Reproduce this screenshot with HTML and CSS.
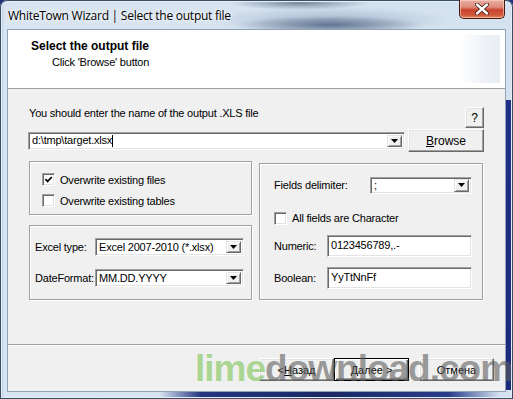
FILE: index.html
```html
<!DOCTYPE html>
<html>
<head>
<meta charset="utf-8">
<link rel="stylesheet" href="styles.css">
</head>
<body>
<div class="window">
  <div class="titlebar">
    <span class="title">WhiteTown Wizard | Select the output file</span>
    <div class="close">
      <svg width="16" height="12" viewBox="0 0 16 12"><path d="M3 1.5 L13 10.5 M13 1.5 L3 10.5" stroke="#3a1a14" stroke-width="4" stroke-linecap="round"/><path d="M3 1.5 L13 10.5 M13 1.5 L3 10.5" stroke="#ffffff" stroke-width="2.4" stroke-linecap="round"/></svg>
    </div>
  </div>
  <div class="client">
    <div class="header">
      <div class="htext">
        <div class="htitle">Select the output file</div>
        <div class="hsub">Click 'Browse' button</div>
      </div>
      <div class="hlogo"></div>
    </div>
    <div class="content">
      <div class="row-label">
        <span class="lbl">You should enter the name of the output .XLS file</span>
        <button class="btn help">?</button>
      </div>
      <div class="row-file">
        <div class="combo cfile"><span class="val">d:\tmp\target.xlsx</span><span class="caret"></span><span class="dd"><svg width="7" height="4" viewBox="0 0 7 4"><polygon points="0,0 7,0 3.5,4" fill="#000"/></svg></span></div>
        <button class="btn browse"><u>B</u>rowse</button>
      </div>
      <div class="groups">
        <div class="col">
          <div class="group g-over">
            <div class="check"><span class="cb"><svg width="9" height="9" viewBox="0 0 9 9"><polyline points="1.5,4.2 3.6,6.4 7.8,2" fill="none" stroke="#000" stroke-width="1.8"/></svg></span><span>Overwrite existing files</span></div>
            <div class="check"><span class="cb"></span><span>Overwrite existing tables</span></div>
          </div>
          <div class="group g-type">
            <div class="frow"><span class="flabel">Excel type:</span><div class="combo ctype"><span class="val">Excel 2007-2010 (*.xlsx)</span><span class="dd"><svg width="7" height="4" viewBox="0 0 7 4"><polygon points="0,0 7,0 3.5,4" fill="#000"/></svg></span></div></div>
            <div class="frow"><span class="flabel">DateFormat:</span><div class="combo ctype"><span class="val">MM.DD.YYYY</span><span class="dd"><svg width="7" height="4" viewBox="0 0 7 4"><polygon points="0,0 7,0 3.5,4" fill="#000"/></svg></span></div></div>
          </div>
        </div>
        <div class="group g-fields">
          <div class="frow r-delim"><span class="flabel2">Fields delimiter:</span><div class="combo cdelim"><span class="val">;</span><span class="dd"><svg width="7" height="4" viewBox="0 0 7 4"><polygon points="0,0 7,0 3.5,4" fill="#000"/></svg></span></div></div>
          <div class="check r-char"><span class="cb"></span><span>All fields are Character</span></div>
          <div class="frow r-num"><span class="flabel3">Numeric:</span><div class="edit">0123456789,.-</div></div>
          <div class="frow r-bool"><span class="flabel3">Boolean:</span><div class="edit">YyTtNnFf</div></div>
        </div>
      </div>
    </div>
    <div class="footer">
      <button class="btn fbtn">&lt; <u>Н</u>азад</button>
      <button class="btn fbtn default"><u>Д</u>алее &gt;</button>
      <button class="btn fbtn cancel">Отмена</button>
    </div>
  </div>
  <div class="watermark"><span class="lime">lime</span><span class="dl">download.com</span></div>
</div>
</body>
</html>
```

FILE: styles.css
```css
* { box-sizing: border-box; }
html, body { margin: 0; padding: 0; }
body {
  width: 513px;
  height: 399px;
  overflow: hidden;
  background: #1d2f7a;
  font-family: "Liberation Sans", Arial, sans-serif;
}
.window {
  position: relative;
  width: 513px;
  height: 399px;
  display: flex;
  flex-direction: column;
  border-radius: 7px 7px 0 0;
  box-shadow: inset 0 0 0 1px #3b4d63, inset 0 0 0 2px #e4eef8;
  background:
    radial-gradient(ellipse 95px 9px at 330px 25px, rgba(70,90,120,0.75), rgba(70,90,120,0) 100%),
    radial-gradient(ellipse 70px 7px at 300px 3px, rgba(60,75,100,0.6), rgba(60,75,100,0) 100%),
    radial-gradient(ellipse 120px 14px at 330px 20px, rgba(130,150,180,0.55), rgba(130,150,180,0) 100%),
    linear-gradient(#1f2f86, #1b2a78) right 1px top 100px / 6px 290px no-repeat,
    linear-gradient(90deg, rgba(30,45,120,0), #24357f 12%, #1a2864 50%, #2a3d8a 85%, rgba(30,45,120,0)) left 160px bottom 1px / 340px 6px no-repeat,
    linear-gradient(90deg, #cfdced 0, #c0d2e6 2px, #d8e4f1 4px, #d4e1ee 100%);
}
.titlebar {
  height: 30px;
  flex: none;
  display: flex;
  align-items: flex-start;
  padding-left: 8px;
}
.title {
  margin-top: 7px;
  font-family: "Open Sans", "Noto Sans", sans-serif;
  font-size: 12px;
  letter-spacing: -0.25px;
  color: #000;
  text-shadow: 0 0 6px rgba(255,255,255,0.95), 0 0 3px rgba(255,255,255,0.9);
}
.close {
  margin-left: auto;
  margin-right: 8px;
  width: 46px;
  height: 19px;
  border: 1px solid #4a1810;
  border-top: none;
  border-radius: 0 0 5px 5px;
  background: linear-gradient(#eab0a4 0, #de8a78 40%, #c9432e 55%, #d25a3c 85%, #e48a60 100%);
  box-shadow: inset 0 0 0 1px rgba(255,220,210,0.55);
  display: flex;
  align-items: center;
  justify-content: center;
}
.client {
  flex: none;
  margin: 0 8px;
  width: 497px;
  height: 361px;
  background: #f0f0f0;
  display: flex;
  flex-direction: column;
  box-shadow: 0 0 0 1px #8fa2b8;
}
.header {
  flex: none;
  height: 59px;
  background: #fff;
  border-bottom: 1px solid #a0a0a0;
  display: flex;
  align-items: flex-start;
  padding: 9px 5px 0 23px;
}
.htitle {
  font-weight: bold;
  font-size: 12px;
  line-height: 14px;
  color: #000;
}
.hsub {
  margin-top: 2px;
  padding-left: 21px;
  font-size: 11px;
  line-height: 14px;
  letter-spacing: -0.2px;
  color: #000;
}
.hlogo {
  margin-left: auto;
  margin-top: -4px;
  width: 40px;
  height: 48px;
  background: linear-gradient(90deg, #ffffff, #eef2f7 60%, #e9eef4);
}
.content {
  flex: none;
  height: 255px;
  padding: 18px 21px 0 21px;
  display: flex;
  flex-direction: column;
  font-size: 11px;
  letter-spacing: -0.2px;
  color: #000;
}
.row-label {
  display: flex;
  justify-content: space-between;
  align-items: flex-start;
  height: 22px;
}
.lbl { line-height: 13px; }
.btn {
  font-family: "Liberation Sans", Arial, sans-serif;
  font-size: 11px;
  color: #000;
  background: #f0f0f0;
  border: 1px solid;
  border-color: #ffffff #696969 #696969 #ffffff;
  box-shadow: inset -1px -1px 0 #a0a0a0, inset 1px 1px 0 #e3e3e3;
  padding: 0;
  margin: 0;
  display: flex;
  align-items: center;
  justify-content: center;
}
.help { width: 19px; height: 21px; font-size: 12px; }
.row-file {
  display: flex;
  align-items: center;
  gap: 3px;
  height: 23px;
}
.browse { width: 76px; height: 23px; font-size: 12px; }
.combo, .edit {
  background: #fff;
  border: 1px solid;
  border-color: #a0a0a0 #ffffff #ffffff #a0a0a0;
  box-shadow: inset 1px 1px 0 #696969, inset -1px -1px 0 #e3e3e3;
  display: flex;
  align-items: center;
  padding: 2px 2px 2px 3px;
  font-size: 11px;
  line-height: 13px;
}
.combo .val { flex: 1; white-space: nowrap; overflow: hidden; }
.combo .dd {
  flex: none;
  width: 15px;
  align-self: stretch;
  background: #f0f0f0;
  border: 1px solid;
  border-color: #e3e3e3 #696969 #696969 #e3e3e3;
  box-shadow: inset 1px 1px 0 #fff, inset -1px -1px 0 #a0a0a0;
  display: flex;
  align-items: center;
  justify-content: center;
}
.cfile {
  margin-left: -1px;
  width: 377px;
  height: 18px;
}
.cfile .val { flex: none; }
.caret {
  width: 1px;
  height: 12px;
  background: #000;
  margin-right: auto;
}
.groups {
  margin-top: 9px;
  display: flex;
  gap: 7px;
}
.col {
  width: 223px;
  display: flex;
  flex-direction: column;
  gap: 10px;
}
.group {
  border: 1px solid #a0a0a0;
  box-shadow: inset 1px 1px 0 #fff, 1px 1px 0 #fff;
}
.g-over {
  height: 54px;
  padding: 7px 0 0 12px;
}
.check {
  display: flex;
  align-items: center;
  gap: 5px;
  height: 21px;
}
.cb {
  flex: none;
  width: 13px;
  height: 13px;
  background: #fff;
  border: 1px solid;
  border-color: #a0a0a0 #ffffff #ffffff #a0a0a0;
  box-shadow: inset 1px 1px 0 #696969, inset -1px -1px 0 #e3e3e3;
  display: flex;
  align-items: center;
  justify-content: center;
}
.g-type {
  height: 75px;
  padding: 9px 0 0 5px;
  display: flex;
  flex-direction: column;
  gap: 7px;
}
.frow {
  display: flex;
  align-items: center;
  height: 24px;
}
.flabel { width: 60px; flex: none; white-space: nowrap; }
.ctype { width: 149px; height: 18px; }
.g-fields {
  margin-top: 2px;
  width: 224px;
  height: 137px;
  padding: 10px 0 0 14px;
  display: flex;
  flex-direction: column;
}
.r-delim { height: 22px; }
.flabel2 { width: 96px; flex: none; }
.cdelim { width: 102px; height: 17px; padding-top: 1px; padding-bottom: 1px; }
.r-char { margin-top: 11px; height: 22px; }
.r-num { margin-top: 6px; height: 22px; }
.r-bool { margin-top: 10px; height: 22px; }
.flabel3 { width: 53px; flex: none; }
.edit {
  width: 145px;
  height: 22px;
  align-items: flex-start;
  padding-top: 3px;
}
.footer {
  flex: none;
  height: 47px;
  border-top: 1px solid #a0a0a0;
  box-shadow: inset 0 1px 0 #fff;
  display: flex;
  justify-content: flex-end;
  align-items: flex-start;
  padding: 13px 11px 0 0;
}
.fbtn { width: 75px; height: 23px; letter-spacing: 0; }
.default {
  border: 1px solid #000;
  box-shadow: inset 1px 1px 0 #fff, inset -1px -1px 0 #696969, inset -2px -2px 0 #a0a0a0;
}
.cancel { margin-left: 10px; }
.watermark {
  position: absolute;
  left: 195px;
  top: 350px;
  font-family: "Liberation Sans", Arial, sans-serif;
  font-weight: bold;
  font-size: 37px;
  line-height: 37px;
  letter-spacing: -1px;
  white-space: nowrap;
  pointer-events: none;
}
.lime { color: rgba(125, 195, 85, 0.6); }
.dl { color: rgba(95, 95, 95, 0.62); }
```
